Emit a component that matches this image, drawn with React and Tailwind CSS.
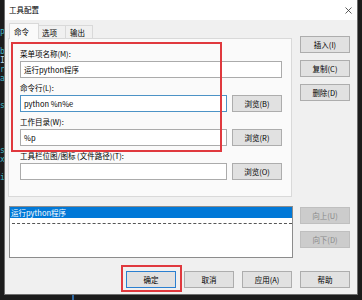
import clsx from "clsx";

/* dialog chrome */
function Btn({ children, disabled, primary, className }) {
  return (
    <div
      className={clsx(
        "flex h-[17px] w-[50px] items-center justify-center border text-[7.5px] leading-none",
        disabled
          ? "border-[#bfbfbf] bg-[#cccccc] text-[#8a8a8a]"
          : primary
            ? "border-[#2a7fd0] bg-[#e1e1e1] text-black"
            : "border-[#adadad] bg-[#e1e1e1] text-black",
        className
      )}
    >
      {children}
    </div>
  );
}

function Field({ value, focused, className }) {
  return (
    <div
      className={clsx(
        "flex h-[17px] items-center border bg-white pl-[3px] text-[7.5px] leading-none text-black",
        focused ? "border-[#4d93c6]" : "border-[#ababab]",
        className
      )}
    >
      {value}
    </div>
  );
}

function Group({ label, value, focused, browse, first }) {
  return (
    <div className={first ? "" : "mt-[5px]"}>
      <div className="mb-[2px] h-[10px] text-[7.5px] leading-[10px] text-black">{label}</div>
      {browse ? (
        <div className="flex gap-[5px]">
          <Field value={value} focused={focused} className="flex-1" />
          <Btn className="w-[48px]">{browse}</Btn>
        </div>
      ) : (
        <Field value={value} focused={focused} />
      )}
    </div>
  );
}

const codeLines = ["P", "", "b", "I", "r", "a", "", "", "s", "", "", "", "", "s", "x", "", "i"];

export default function App() {
  return (
    <div className="flex h-[300px] w-[362px] overflow-hidden bg-[#1c1c1c] font-['Noto_Sans_CJK_SC',sans-serif]">
      {/* editor behind the dialog */}
      <div className="flex w-[4px] shrink-0 flex-col overflow-hidden pt-[29px] font-['DejaVu_Sans_Mono',monospace] text-[8px]">
        {codeLines.map((c, i) => (
          <div key={i} className={clsx("h-[9px] leading-[9px]", c === "I" ? "text-[#b5d8f0]" : "text-[#3fb3c4]")}>
            {c}
          </div>
        ))}
      </div>

      <div className="flex w-[354px] shrink-0 flex-col">
        <div className="flex h-[295px] flex-col border-x border-b border-[#6e6e6e] bg-[#f0f0f0]">
          {/* title bar */}
          <div className="flex h-[20px] items-center justify-between bg-white pl-[4px] pr-[5px]">
            <span className="text-[7.5px] leading-none text-black">工具配置</span>
            <svg width="7" height="7" viewBox="0 0 7 7">
              <path d="M0.5 0.5 L6.5 6.5 M6.5 0.5 L0.5 6.5" stroke="#333" strokeWidth="0.8" />
            </svg>
          </div>

          <div className="flex flex-1 flex-col pl-[3px] pr-[7px] pt-[3px]">
            {/* tabs + buttons */}
            <div className="flex gap-[8px]">
              <div className="w-[284px]">
                <div className="flex h-[15px] items-end pl-[1px]">
                  <div className="relative z-10 -mb-px h-[16px] w-[30px] border-x border-t border-[#d9d9d9] bg-[#fafafa] pl-[4px] text-[7.5px] leading-[15px] text-black">
                    命令
                  </div>
                  <div className="h-[13px] w-[27px] border-r border-t border-[#d9d9d9] bg-[#f0f0f0] pl-[3px] text-[7.5px] leading-[13px] text-black">
                    选项
                  </div>
                  <div className="h-[13px] w-[27px] border-r border-t border-[#d9d9d9] bg-[#f0f0f0] pl-[4px] text-[7.5px] leading-[13px] text-black">
                    输出
                  </div>
                </div>
                <div className="relative h-[159px] border border-[#d9d9d9] bg-[#fafafa] pl-[11px] pr-[9px] pt-[10px]">
                  <Group first label="菜单项名称(M):" value="运行python程序" />
                  <Group label="命令行(L):" value="python %n%e" focused browse="浏览(B)" />
                  <Group label="工作目录(W):" value="%p" browse="浏览(R)" />
                  <Group label="工具栏位图/图标 (文件路径)(T):" value="" browse="浏览(O)" />
                  <div className="absolute left-[2px] top-[3px] h-[110px] w-[211px] border-2 border-[#e0393e]" />
                </div>
              </div>
              <div className="flex w-[50px] flex-col gap-[7px] pt-[13px]">
                <Btn>插入(I)</Btn>
                <Btn>复制(C)</Btn>
                <Btn>删除(D)</Btn>
              </div>
            </div>

            {/* list + move buttons */}
            <div className="mt-[9px] flex gap-[8px]">
              <div className="ml-[1px] h-[52px] w-[284px] border border-[#8c8c8c] bg-white">
                <div className="h-[11px] bg-[#0078d7] pl-[1px] text-[7.5px] leading-[11px] text-white">运行python程序</div>
                <div className="ml-[2px] mt-[5px] border-t border-dashed border-[#555]" />
              </div>
              <div className="-ml-px flex w-[50px] flex-col gap-[7px] pt-[1px]">
                <Btn disabled>向上(U)</Btn>
                <Btn disabled>向下(D)</Btn>
              </div>
            </div>

            {/* dialog buttons */}
            <div className="mt-[13px] flex justify-end gap-[8px]">
              <div className="relative">
                <Btn primary>确定</Btn>
                <div className="absolute -left-[5px] -top-[6px] h-[27px] w-[61px] border-2 border-[#e0393e]" />
              </div>
              <Btn>取消</Btn>
              <Btn>应用(A)</Btn>
              <Btn>帮助</Btn>
            </div>
          </div>
        </div>
        <div className="flex h-[5px] pl-[68px]">
          <div className="w-[2px] bg-[#2f6aa6]" />
        </div>
      </div>

      <div className="w-[4px] shrink-0" />
    </div>
  );
}
